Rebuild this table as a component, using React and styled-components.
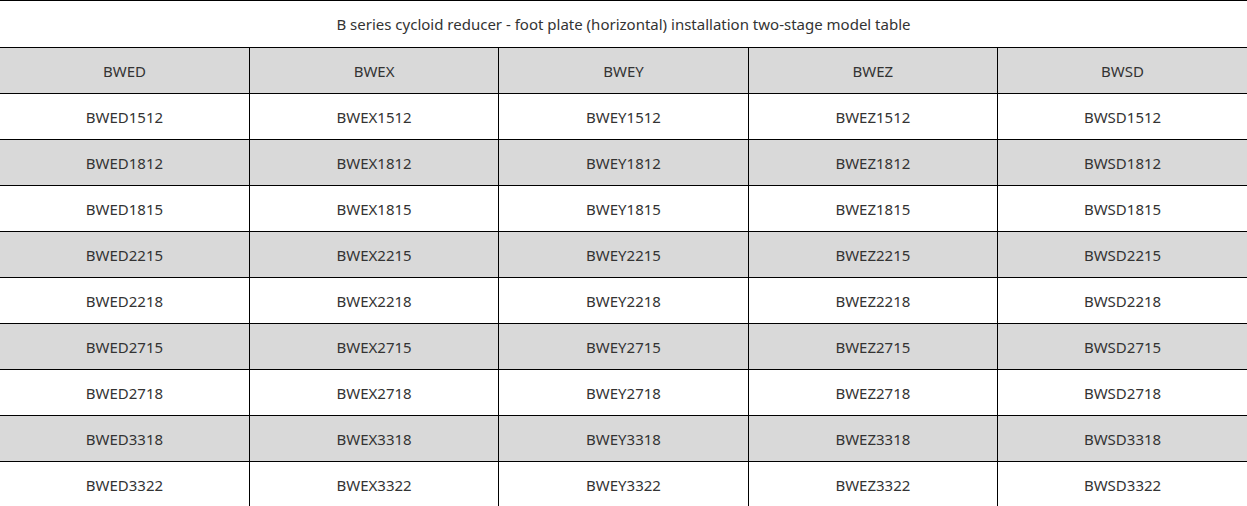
import styled, { createGlobalStyle } from 'styled-components';

const Global = createGlobalStyle`
  html, body {
    margin: 0;
    padding: 0;
    background: #fff;
    overflow: hidden;
  }
  body {
    font-family: "Noto Sans", "Open Sans", Arial, sans-serif;
    color: #333;
  }
`;

const Table = styled.table`
  width: 100%;
  border-collapse: collapse;
  table-layout: fixed;
  font-size: 15px;
`;

const Caption = styled.td`
  height: 46px;
  padding: 0;
  text-align: center;
  vertical-align: middle;
  border-top: 1px solid #000;
  border-bottom: 1px solid #000;
`;

const Row = styled.tr`
  background: ${({ shade }) => shade ? '#d9d9d9' : '#fff'};
`;

const Cell = styled.td`
  height: 45px;
  padding: 0;
  text-align: center;
  vertical-align: middle;
  border: 1px solid #000;
  &:first-child { border-left: none; }
  &:last-child { border-right: none; }
`;

const series = ['BWED', 'BWEX', 'BWEY', 'BWEZ', 'BWSD'];
const sizes = ['1512', '1812', '1815', '2215', '2218', '2715', '2718', '3318', '3322'];

const App = () => {
  return (
    <>
      <Global />
      <Table>
        <tbody>
          <tr>
            <Caption colSpan={5}>
              B series cycloid reducer - foot plate (horizontal) installation two-stage model table
            </Caption>
          </tr>
          <Row shade>
            {series.map((s) => <Cell key={s}>{s}</Cell>)}
          </Row>
          {sizes.map((n, i) => (
            <Row key={n} shade={i % 2 === 1}>
              {series.map((s) => <Cell key={s}>{s + n}</Cell>)}
            </Row>
          ))}
        </tbody>
      </Table>
    </>
  );
};

export default App;
